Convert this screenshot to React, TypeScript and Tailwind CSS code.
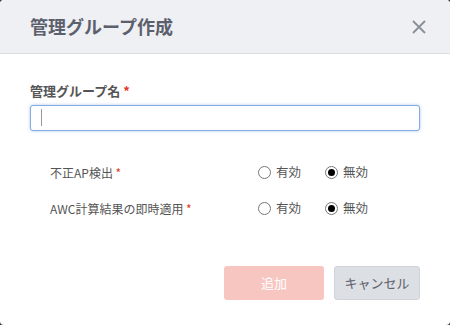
import { useState } from 'react'

const font = { fontFamily: '"Noto Sans CJK JP", "Noto Sans", sans-serif' }

function Radio({ checked, label, onClick }: { checked: boolean; label: string; onClick: () => void }) {
  return (
    <button type="button" onClick={onClick} className="flex items-center gap-[5px] text-[12.5px] text-[#555]">
      <span className="flex h-[13px] w-[13px] items-center justify-center rounded-full border border-[#777] bg-white">
        {checked && <span className="h-[7px] w-[7px] rounded-full bg-black" />}
      </span>
      <span className="leading-none">{label}</span>
    </button>
  )
}

function SettingRow({ label }: { label: string }) {
  const [on, setOn] = useState(false)
  return (
    <div className="flex h-[36px] items-center pl-[20px]">
      <div className="w-[208px] text-[12px] text-[#555]">
        {label} <span className="text-[#e0382b]">*</span>
      </div>
      <div className="flex items-center gap-[24px]">
        <Radio checked={on} label="有効" onClick={() => setOn(true)} />
        <Radio checked={!on} label="無効" onClick={() => setOn(false)} />
      </div>
    </div>
  )
}

export default function App() {
  return (
    <div className="h-[325px] w-[450px] bg-[#3a3a3a]" style={font}>
      <div className="flex h-full flex-col overflow-hidden rounded-[4px] bg-white">
        {/* Header */}
        <div className="flex h-[54px] shrink-0 items-center justify-between border-b border-[#dcdde3] bg-[#eff0f4] pl-[30px] pr-[24px]">
          <h1 className="text-[18px] font-bold text-[#5c606c]">管理グループ作成</h1>
          <button type="button" className="text-[#8a8e9b]">
            <svg width="14" height="14" viewBox="0 0 14 14" fill="none" stroke="currentColor" strokeWidth="1.8">
              <path d="M1 1l12 12M13 1L1 13" />
            </svg>
          </button>
        </div>

        {/* Body */}
        <div className="flex flex-1 flex-col px-[30px] pt-[28px]">
          <label className="text-[13px] font-bold leading-[18px] text-[#555]">
            管理グループ名 <span className="text-[#e0382b]">*</span>
          </label>
          <div className="relative mt-[4px]">
            <input
              type="text"
              className="h-[26px] w-[390px] rounded-[3px] border border-[#82ace0] bg-white px-[10px] text-[13px] caret-transparent shadow-[0_0_3px_rgba(82,140,214,0.5)] outline-none"
            />
            <span className="absolute left-[11px] top-[5px] h-[17px] w-px bg-[#999]" />
          </div>

          <div className="mt-[24px] flex flex-col">
            <SettingRow label="不正AP検出" />
            <SettingRow label="AWC計算結果の即時適用" />
          </div>

          <div className="mt-[39px] flex justify-end gap-[10px]">
            <button
              type="button"
              className="h-[34px] w-[100px] rounded-[3px] bg-[#f7c6c1] text-[13px] text-white"
            >
              追加
            </button>
            <button
              type="button"
              className="h-[34px] w-[86px] rounded-[3px] border border-[#cfd3d8] bg-[#dcdfe3] text-[13px] text-[#5c606c]"
            >
              キャンセル
            </button>
          </div>
        </div>
      </div>
    </div>
  )
}
